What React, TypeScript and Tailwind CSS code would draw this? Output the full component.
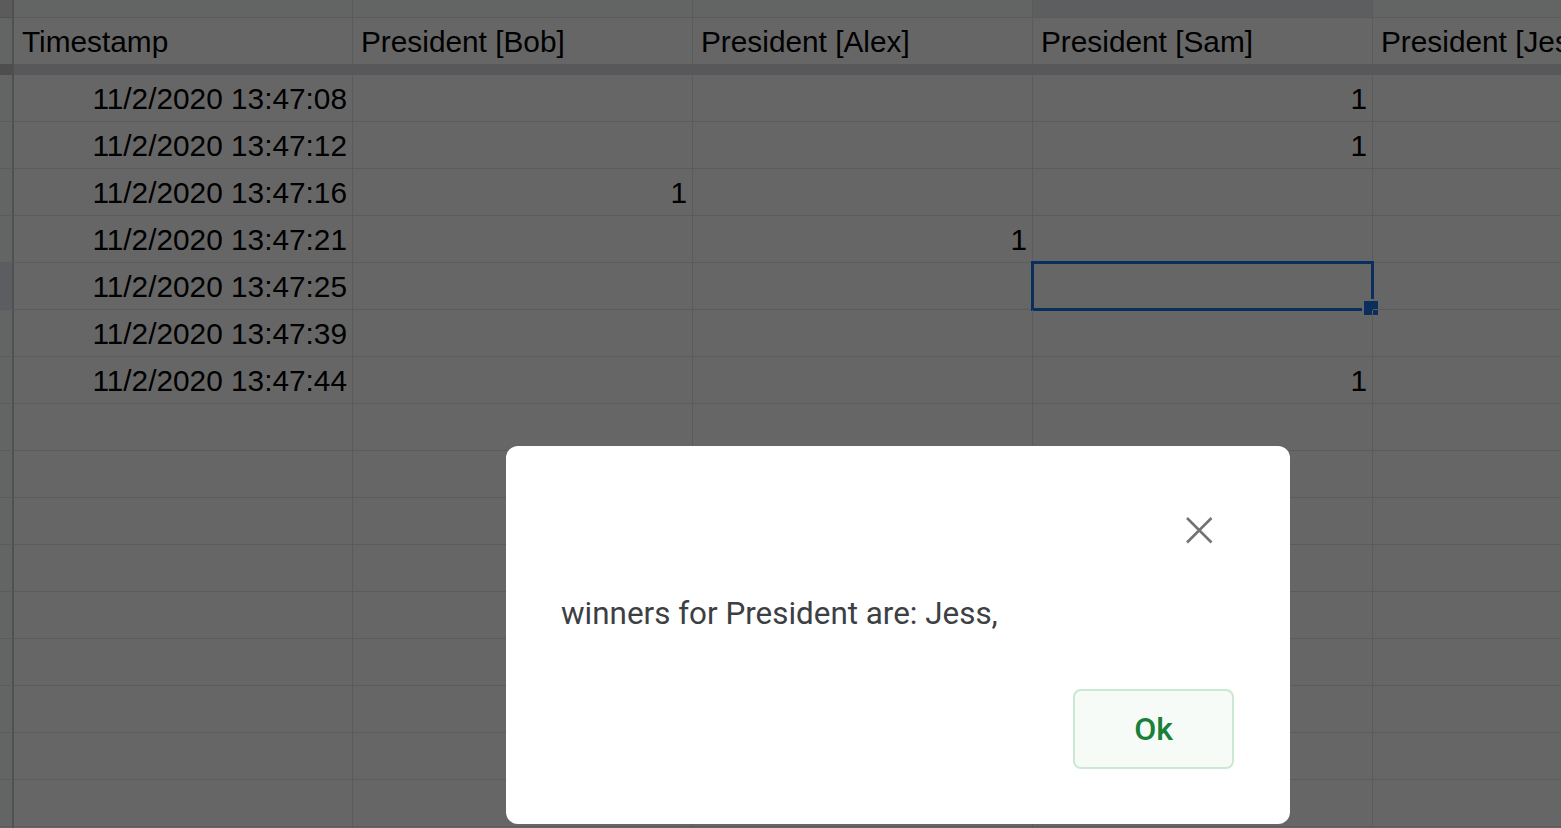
import React from 'react';

const cols = ['Timestamp', 'President [Bob]', 'President [Alex]', 'President [Sam]', 'President [Jess]'];

const data: string[][] = [
  ['11/2/2020 13:47:08', '', '', '1', ''],
  ['11/2/2020 13:47:12', '', '', '1', ''],
  ['11/2/2020 13:47:16', '1', '', '', ''],
  ['11/2/2020 13:47:21', '', '1', '', ''],
  ['11/2/2020 13:47:25', '', '', '', ''],
  ['11/2/2020 13:47:39', '', '', '', ''],
  ['11/2/2020 13:47:44', '', '', '1', ''],
  ...Array.from({ length: 10 }, () => ['', '', '', '', '']),
];

const colW = ['w-[339px]', 'w-[340px]', 'w-[340px]', 'w-[340px]', 'w-[400px]'];

const SelectedCell: React.FC = () => (
  <>
    <div className="absolute -left-[2px] -top-[2px] w-[343px] h-[50px] border-[3px] border-[#1a73e8]" />
    <div className="absolute left-[329px] top-[36px] w-[18px] h-[18px] bg-[#1a73e8] border-2 border-white" />
  </>
);

const App: React.FC = () => {
  return (
    <div className="relative w-[1561px] h-[828px] overflow-hidden bg-white font-['Liberation_Sans',Arial,sans-serif] text-[29.8px] text-black whitespace-nowrap">
      {/* column letters row */}
      <div className="flex h-[18px]">
        <div className="w-[14px] shrink-0 bg-[#e3e3e3] border-r-2 border-b border-[#c9c9c9]" />
        {cols.map((c, i) => (
          <div
            key={c}
            className={`${colW[i]} shrink-0 border-r border-b border-[#e2e3e3] ${i === 3 ? 'bg-[#e8eaed]' : 'bg-[#f8f9fa]'}`}
          />
        ))}
      </div>

      {/* header row */}
      <div className="flex h-[46px]">
        <div className="w-[14px] shrink-0 bg-[#f8f9fa] border-r-2 border-[#c9c9c9]" />
        {cols.map((c, i) => (
          <div key={c} className={`${colW[i]} shrink-0 border-r border-[#e2e3e3] flex items-center pl-[8px] pt-[2px] overflow-hidden`}>
            {c}
          </div>
        ))}
      </div>

      {/* frozen divider */}
      <div className="flex h-[11px]">
        <div className="w-[14px] shrink-0 bg-[#c4c4c4]" />
        <div className="flex-1 bg-[#dcdde1]" />
      </div>

      {data.map((row, r) => (
        <div key={r} className="flex h-[47px]">
          <div
            className={`w-[14px] shrink-0 border-r-2 border-b border-r-[#c9c9c9] border-b-[#e2e3e3] ${r === 4 ? 'bg-[#e6e9ef]' : 'bg-[#f8f9fa]'}`}
          />
          {row.map((v, i) => (
            <div
              key={i}
              className={`${colW[i]} shrink-0 relative border-r border-b border-[#e2e3e3] flex items-center justify-end pr-[5px] pt-[2px]`}
            >
              {v}
              {r === 4 && i === 3 && <SelectedCell />}
            </div>
          ))}
        </div>
      ))}

      {/* modal backdrop */}
      <div className="absolute inset-0 bg-black/60" />

      {/* dialog */}
      <div className="absolute left-[506px] top-[446px] w-[784px] h-[378px] bg-white rounded-[12px] pt-[60px] pl-[55px] pr-[56px] font-['Roboto',sans-serif] flex flex-col">
        <div className="flex justify-end h-[48px]">
          <button className="w-[48px] h-[48px] mr-[11px] flex items-center justify-center">
            <svg width="48" height="48" viewBox="0 0 48 48">
              <path d="M12 12 L36.5 36.5 M36.5 12 L12 36.5" stroke="#737373" strokeWidth="2.6" fill="none" />
            </svg>
          </button>
        </div>
        <p className="mt-[42px] text-[31.4px] leading-[36px] text-[#3c4043]">winners for President are: Jess,</p>
        <div className="flex justify-end mt-[57px]">
          <button className="w-[161px] h-[80px] rounded-[8px] border-2 border-[#cbe8d2] bg-[#f6fbf7] text-[#188038] text-[32px] font-medium flex items-center justify-center">
            Ok
          </button>
        </div>
      </div>
    </div>
  );
};

export default App;
